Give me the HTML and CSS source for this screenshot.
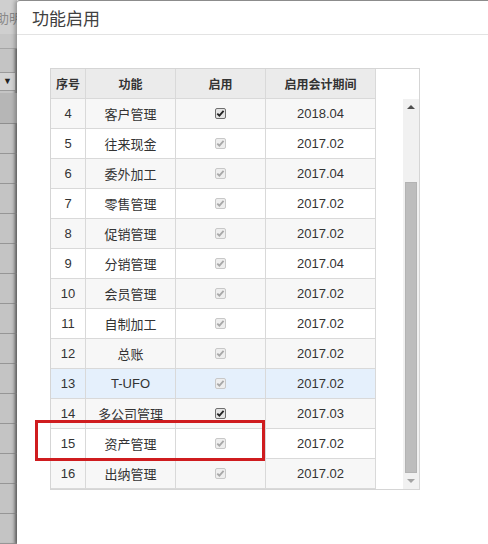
FILE: index.html
```html
<!DOCTYPE html>
<html lang="zh-CN">
<head>
<meta charset="utf-8">
<title>功能启用</title>
<link rel="stylesheet" href="styles.css">
</head>
<body>
<div class="page">
  <div class="strip">
    <div class="strip-top"><span class="strip-text">助明</span></div>
    <div class="strip-band"></div>
    <div class="strip-select"><span class="strip-drop">▼</span></div>
    <div class="strip-head"></div>
    <div class="strip-row"></div><div class="strip-row"></div><div class="strip-row"></div>
    <div class="strip-row"></div><div class="strip-row"></div><div class="strip-row"></div>
    <div class="strip-row"></div><div class="strip-row"></div><div class="strip-row"></div>
    <div class="strip-row"></div><div class="strip-row"></div><div class="strip-row"></div>
    <div class="strip-row"></div><div class="strip-row"></div>
  </div>
  <div class="dialog">
    <div class="dialog-header">功能启用</div>
    <div class="dialog-body">
      <div class="grid">
        <div class="table">
          <div class="row head">
            <div class="cell">序号</div><div class="cell">功能</div><div class="cell">启用</div><div class="cell">启用会计期间</div>
          </div>
          <div class="row even"><div class="cell num">4</div><div class="cell">客户管理</div><div class="cell"><span class="cb on"></span></div><div class="cell num">2018.04</div></div>
          <div class="row"><div class="cell num">5</div><div class="cell">往来现金</div><div class="cell"><span class="cb"></span></div><div class="cell num">2017.02</div></div>
          <div class="row even"><div class="cell num">6</div><div class="cell">委外加工</div><div class="cell"><span class="cb"></span></div><div class="cell num">2017.04</div></div>
          <div class="row"><div class="cell num">7</div><div class="cell">零售管理</div><div class="cell"><span class="cb"></span></div><div class="cell num">2017.02</div></div>
          <div class="row even"><div class="cell num">8</div><div class="cell">促销管理</div><div class="cell"><span class="cb"></span></div><div class="cell num">2017.02</div></div>
          <div class="row"><div class="cell num">9</div><div class="cell">分销管理</div><div class="cell"><span class="cb"></span></div><div class="cell num">2017.04</div></div>
          <div class="row even"><div class="cell num">10</div><div class="cell">会员管理</div><div class="cell"><span class="cb"></span></div><div class="cell num">2017.02</div></div>
          <div class="row"><div class="cell num">11</div><div class="cell">自制加工</div><div class="cell"><span class="cb"></span></div><div class="cell num">2017.02</div></div>
          <div class="row even"><div class="cell num">12</div><div class="cell">总账</div><div class="cell"><span class="cb"></span></div><div class="cell num">2017.02</div></div>
          <div class="row hover"><div class="cell num">13</div><div class="cell num">T-UFO</div><div class="cell"><span class="cb"></span></div><div class="cell num">2017.02</div></div>
          <div class="row even"><div class="cell num">14</div><div class="cell">多公司管理</div><div class="cell"><span class="cb on"></span></div><div class="cell num">2017.03</div></div>
          <div class="row"><div class="cell num">15</div><div class="cell">资产管理</div><div class="cell"><span class="cb"></span></div><div class="cell num">2017.02</div></div>
          <div class="row even"><div class="cell num">16</div><div class="cell">出纳管理</div><div class="cell"><span class="cb"></span></div><div class="cell num">2017.02</div></div>
        </div>
        <div class="side">
          <div class="scrollbar">
            <div class="arrow up"></div>
            <div class="track"><div class="thumb"></div></div>
            <div class="arrow down"></div>
          </div>
        </div>
      </div>
    </div>
  </div>
</div>
<div class="mark"></div>
</body>
</html>
```
FILE: styles.css
```css
html, body {
  margin: 0;
  padding: 0;
}
body {
  width: 488px;
  height: 544px;
  overflow: hidden;
  background: #fff;
  font-family: "Liberation Sans", "Noto Sans CJK SC", sans-serif;
  color: #333;
  position: relative;
}
.page {
  display: flex;
  height: 544px;
}
.strip {
  width: 17px;
  flex: none;
  background: #c4c4c4;
  display: flex;
  flex-direction: column;
  overflow: hidden;
  box-shadow: inset -3px 0 3px -1px rgba(0,0,0,0.35);
}
.strip-top {
  height: 36px;
  background: #cfcfcf;
  overflow: hidden;
  white-space: nowrap;
}
.strip-text {
  display: block;
  margin-left: -4px;
  margin-top: 10px;
  font-size: 13px;
  color: #8a8a8a;
  font-family: "Noto Sans CJK SC", sans-serif;
  line-height: 16px;
}
.strip-band {
  height: 16px;
  border-bottom: 1px solid #a5a5a5;
  background: #c6c6c6;
}
.strip-select {
  height: 47px;
  display: flex;
  align-items: flex-start;
}
.strip-drop {
  margin-top: 23px;
  width: 15px;
  height: 17px;
  border: 1px solid #9a9a9a;
  border-left: none;
  background: #d3d3d3;
  font-size: 9px;
  line-height: 17px;
  text-align: center;
  color: #222;
}
.strip-head {
  height: 32px;
  background: #b6b6b6;
  border-bottom: 1px solid #8e8e8e;
}
.strip-row {
  height: 29px;
  flex: none;
  border-bottom: 1px solid #969696;
}
.dialog {
  flex: 1;
  background: #fff;
  border-top: 1px solid #8c8c8c;
  border-top-left-radius: 3px;
  box-shadow: -2px 0 4px rgba(0,0,0,0.3);
  display: flex;
  flex-direction: column;
}
.dialog-header {
  height: 33px;
  border-bottom: 1px solid #e3e3e3;
  padding-left: 15px;
  font-family: "Noto Sans CJK SC", sans-serif;
  font-size: 17px;
  line-height: 33px;
  color: #404040;
}
.dialog-body {
  padding: 33px 0 0 33px;
}
.grid {
  width: 368px;
  height: 420px;
  border: 1px solid #d5d5d5;
  display: flex;
}
.table {
  width: 325px;
  flex: none;
}
.row {
  display: grid;
  grid-template-columns: 35px 90px 90px 110px;
  height: 30px;
  background: #fff;
}
.row.even {
  background: #f7f7f7;
}
.row.hover {
  background: #e5f0fc;
}
.row.head {
  background: #ebebeb;
}
.cell {
  box-sizing: border-box;
  border-right: 1px solid #d9d9d9;
  border-bottom: 1px solid #d9d9d9;
  display: flex;
  align-items: center;
  justify-content: center;
  font-size: 13px;
  font-family: "Noto Sans CJK SC", sans-serif;
  color: #333;
  white-space: nowrap;
}
.cell.num {
  font-family: "Liberation Sans", sans-serif;
}
.head .cell {
  font-size: 12px;
  font-weight: bold;
  color: #333;
}
.cb {
  width: 11px;
  height: 11px;
  box-sizing: border-box;
  border: 1px solid #c8c8c8;
  border-radius: 2px;
  background: #eee url("data:image/svg+xml,%3Csvg xmlns='http://www.w3.org/2000/svg' viewBox='0 0 11 11'%3E%3Cpath d='M2.3 5.6 L4.4 7.7 L8.6 2.8' fill='none' stroke='%23a8a8a8' stroke-width='1.8'/%3E%3C/svg%3E") center / 11px 11px no-repeat;
}
.cb.on {
  border-color: #6e6e6e;
  background: #e4e4e4 url("data:image/svg+xml,%3Csvg xmlns='http://www.w3.org/2000/svg' viewBox='0 0 11 11'%3E%3Cpath d='M2.3 5.6 L4.4 7.7 L8.6 2.8' fill='none' stroke='%23222' stroke-width='1.8'/%3E%3C/svg%3E") center / 11px 11px no-repeat;
}
.side {
  flex: 1;
  display: flex;
  justify-content: flex-end;
  padding-top: 30px;
}
.scrollbar {
  width: 16px;
  background: #f1f1f1;
  display: flex;
  flex-direction: column;
  align-items: center;
}
.arrow {
  height: 16px;
  width: 16px;
  position: relative;
  flex: none;
}
.arrow.up::after {
  content: "";
  position: absolute;
  left: 4px;
  top: 6px;
  border-left: 4px solid transparent;
  border-right: 4px solid transparent;
  border-bottom: 4px solid #505050;
}
.arrow.down::after {
  content: "";
  position: absolute;
  left: 4px;
  top: 6px;
  border-left: 4px solid transparent;
  border-right: 4px solid transparent;
  border-top: 4px solid #a3a3a3;
}
.track {
  flex: 1;
  width: 16px;
  display: flex;
  flex-direction: column;
  justify-content: flex-end;
  align-items: center;
}
.thumb {
  width: 12px;
  height: 291px;
  background: #bdbdbd;
  border: 1px solid #b3b3b3;
  box-sizing: border-box;
}
.mark {
  position: absolute;
  left: 35px;
  top: 420px;
  width: 230px;
  height: 41px;
  box-sizing: border-box;
  border: 3px solid #cf1c1f;
}
```
